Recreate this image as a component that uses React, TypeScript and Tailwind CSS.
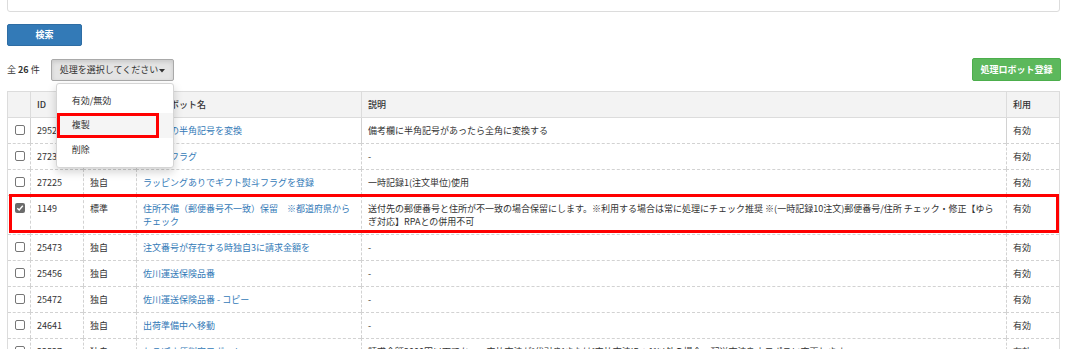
import React from "react";

type Row = {
  id: string;
  type: string;
  name: string;
  desc: string;
  use: string;
  checked?: boolean;
};

const rows: Row[] = [
  { id: "29522", type: "独自", name: "備考欄の半角記号を変換", desc: "備考欄に半角記号があったら全角に変換する", use: "有効" },
  { id: "27233", type: "独自", name: "ギフトフラグ", desc: "-", use: "有効" },
  { id: "27225", type: "独自", name: "ラッピングありでギフト熨斗フラグを登録", desc: "一時記録1(注文単位)使用", use: "有効" },
  {
    id: "1149",
    type: "標準",
    name: "住所不備（郵便番号不一致）保留　※都道府県からチェック",
    desc: "送付先の郵便番号と住所が不一致の場合保留にします。※利用する場合は常に処理にチェック推奨 ※(一時記録10注文)郵便番号/住所 チェック・修正【ゆらぎ対応】RPAとの併用不可",
    use: "有効",
    checked: true,
  },
  { id: "25473", type: "独自", name: "注文番号が存在する時独自3に請求金額を", desc: "-", use: "有効" },
  { id: "25456", type: "独自", name: "佐川運送保険品番", desc: "-", use: "有効" },
  { id: "25472", type: "独自", name: "佐川運送保険品番 - コピー", desc: "-", use: "有効" },
  { id: "24641", type: "独自", name: "出荷準備中へ移動", desc: "-", use: "有効" },
  {
    id: "22527",
    type: "独自",
    name: "ねこぽす便判定ロボット",
    desc: "請求金額2000円以下でかつ、支払方法が[代引き]または[支払方法ID：1]以外の場合、配送方法をネコポスに変更します",
    use: "有効",
  },
];

function Checkbox({ checked }: { checked?: boolean }) {
  if (checked) {
    return (
      <span className="inline-flex h-[10px] w-[10px] items-center justify-center rounded-[2px] bg-[#6b6b6b]">
        <svg width="8" height="8" viewBox="0 0 8 8">
          <path d="M1.3 4.2 L3.2 6 L6.8 1.8" stroke="#fff" strokeWidth="1.4" fill="none" />
        </svg>
      </span>
    );
  }
  return <span className="inline-block h-[10px] w-[10px] rounded-[2px] border border-[#767676] bg-white" />;
}

export default function App() {
  return (
    <div className="relative h-[349px] w-[1071px] overflow-hidden bg-white font-['Noto_Sans_CJK_JP',sans-serif] text-[9px] text-[#333]">
      {/* top panel remnant */}
      <div className="ml-[7px] mr-[11px] mt-[-10px] h-[22px] rounded-b-[3px] border border-[#dcdcdc] bg-white" />

      {/* search button */}
      <div className="ml-[7px] mt-[12px]">
        <button className="flex h-[22px] w-[75px] items-center justify-center rounded-[2px] border border-[#2e6da4] bg-[#337ab7] font-bold text-white">
          検索
        </button>
      </div>

      {/* toolbar */}
      <div className="ml-[7px] mr-[10px] mt-[12px] flex items-center">
        <span className="leading-[13px]">
          全 <span className="font-bold">26</span> 件
        </span>
        <div className="relative ml-[11px]">
          <button className="flex h-[22px] w-[123px] items-center rounded-[2px] border border-[#a9a9a9] bg-[#e4e4e4] pl-[8px] shadow-[inset_0_2px_4px_rgba(0,0,0,0.12)]">
            <span>処理を選択してください</span>
            <svg width="6" height="4" viewBox="0 0 6 4" className="ml-[1px] mt-[2px]">
              <path d="M0 0 H6 L3 3.5 Z" fill="#333" />
            </svg>
          </button>
          {/* dropdown menu */}
          <div className="absolute left-[5px] top-[24px] z-20 w-[118px] rounded-[3px] border border-[#d5d5d5] bg-white py-[5px] shadow-[0_4px_10px_rgba(0,0,0,0.18)]">
            <div className="flex h-[24px] items-center pl-[15px]">有効/無効</div>
            <div className="relative flex h-[25px] items-center bg-[#f5f5f5] pl-[15px]">
              複製
              <div className="absolute left-0 top-0 h-[25px] w-[102px] border-[3px] border-[#ff0000]" />
            </div>
            <div className="flex h-[24px] items-center pl-[15px]">削除</div>
          </div>
        </div>
        <div className="flex-1" />
        <button className="flex h-[23px] w-[89px] items-center justify-center rounded-[2px] border border-[#4cae4c] bg-[#5cb85c] font-bold text-white">
          処理ロボット登録
        </button>
      </div>

      {/* table */}
      <div className="relative ml-[7px] mr-[11px] mt-[10px] border-x border-t border-[#dcdcdc]">
        <table className="w-full table-fixed border-separate border-spacing-0">
          <colgroup>
            <col className="w-[22px]" />
            <col className="w-[53px]" />
            <col className="w-[53px]" />
            <col className="w-[225px]" />
            <col />
            <col className="w-[53px]" />
          </colgroup>
          <thead>
            <tr className="bg-[#f3f3f3] text-left">
              <th className="border-b border-[#dcdcdc] py-[6px] leading-[13px]" />
              <th className="border-b border-l border-[#dcdcdc] px-[6px] py-[6px] font-medium leading-[13px]">ID</th>
              <th className="border-b border-l border-[#dcdcdc] px-[6px] py-[6px] font-medium leading-[13px]">種別</th>
              <th className="border-b border-l border-[#dcdcdc] px-[6px] py-[6px] font-medium leading-[13px]">処理ロボット名</th>
              <th className="border-b border-l border-[#dcdcdc] px-[6px] py-[6px] font-medium leading-[13px]">説明</th>
              <th className="border-b border-l border-[#dcdcdc] px-[6px] py-[6px] font-medium leading-[13px]">利用</th>
            </tr>
          </thead>
          <tbody>
            {rows.map((r, i) => {
              const top = i === 0 ? "" : "border-t border-dashed border-[#d2d2d2]";
              return (
                <tr key={r.id} className="align-top">
                  <td className={`${top} py-[6px] pl-[7px] leading-[13px]`}>
                    <span className="mt-[1px] flex">
                      <Checkbox checked={r.checked} />
                    </span>
                  </td>
                  <td className={`${top} border-l border-l-dashed border-l-[#d2d2d2] px-[6px] py-[6px] leading-[13px]`}>{r.id}</td>
                  <td className={`${top} border-l border-l-dashed border-l-[#d2d2d2] px-[6px] py-[6px] leading-[13px]`}>{r.type}</td>
                  <td className={`${top} border-l border-l-dashed border-l-[#d2d2d2] px-[6px] py-[6px] leading-[13px] text-[#337ab7]`}>{r.name}</td>
                  <td className={`${top} border-l border-l-dashed border-l-[#d2d2d2] px-[6px] py-[6px] leading-[13px]`}>{r.desc}</td>
                  <td className={`${top} border-l border-l-dashed border-l-[#d2d2d2] px-[6px] py-[6px] leading-[13px]`}>{r.use}</td>
                </tr>
              );
            })}
          </tbody>
        </table>
        {/* highlight annotation */}
        <div className="pointer-events-none absolute left-[1px] top-[102px] h-[39px] w-[1050px] border-[3px] border-[#ff0000]" />
      </div>
    </div>
  );
}
